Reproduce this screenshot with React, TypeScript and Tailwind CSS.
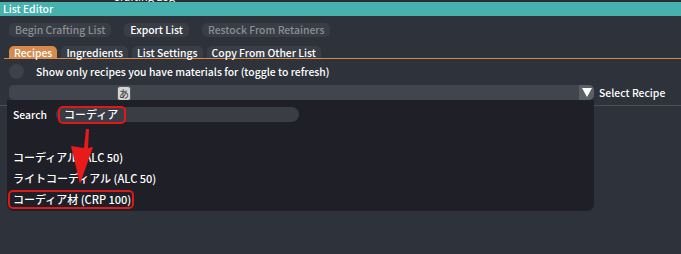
import React from 'react';

const font = { fontFamily: '"Noto Sans CJK JP", "Noto Sans", sans-serif' };

function Btn({ label, disabled }: { label: string; disabled?: boolean }) {
  return (
    <div
      className={`h-[14px] px-[6px] rounded-[5px] bg-[#393d45] text-[10.4px] font-medium leading-[14px] ${
        disabled ? 'text-[#8b8e94]' : 'text-white'
      }`}
    >
      {label}
    </div>
  );
}

function Tab({ label, active }: { label: string; active?: boolean }) {
  return (
    <div
      className={`h-[12px] px-[5px] rounded-t-[5px] text-[10.4px] font-medium leading-[13px] text-white ${
        active ? 'bg-[#d68a4c]' : 'bg-[#393d45]'
      }`}
    >
      {label}
    </div>
  );
}

export default function App() {
  const results = ['コーディアル (ALC 50)', 'ライトコーディアル (ALC 50)', 'コーディア材 (CRP 100)'];

  return (
    <div className="relative w-full h-[254px] overflow-hidden bg-[#2e323a]" style={font}>
      {/* clipped window behind */}
      <div className="h-[2px] bg-[#2a2d34] overflow-hidden">
        <div className="ml-[113px] -mt-[9px] text-[11px] leading-[11px] text-white">Crafting Log</div>
      </div>

      {/* title bar */}
      <div className="h-[14px] bg-[#46b2ad] pl-[3px] text-[10.4px] font-medium leading-[14px] text-white">List Editor</div>

      {/* action buttons */}
      <div className="flex gap-[13px] px-[9px] mt-[7px]">
        <Btn label="Begin Crafting List" disabled />
        <Btn label="Export List" />
        <Btn label="Restock From Retainers" disabled />
      </div>

      {/* tabs */}
      <div className="ml-[4px] mt-[9px] pl-[5px] flex gap-[4px] border-b border-[#d68a4c]">
        <Tab label="Recipes" active />
        <Tab label="Ingredients" />
        <Tab label="List Settings" />
        <Tab label="Copy From Other List" />
      </div>

      {/* checkbox */}
      <div className="flex items-center mt-[5px] pl-[9px]">
        <div className="w-[15px] h-[15px] rounded-full bg-[#3d4149]" />
        <span className="ml-[12px] text-[10.4px] font-medium leading-[15px] text-white">
          Show only recipes you have materials for (toggle to refresh)
        </span>
      </div>

      {/* combo */}
      <div className="relative flex items-center mt-[6px] pl-[9px]">
        <div className="relative w-[570px] h-[15px] rounded-l-[5px] bg-[#41454d]">
          <div className="absolute left-[108px] top-[1px] w-[14px] h-[15px] rounded-[3px] bg-[#d6d6d6] border border-[#55585e] text-[10px] leading-[13px] text-center text-[#333]">
            あ
          </div>
        </div>
        <div className="w-[15px] h-[15px] rounded-r-[5px] bg-[#5b5f66] flex items-center justify-center">
          <svg width="10" height="9" viewBox="0 0 10 9">
            <polygon points="0,0 10,0 5,9" fill="#ffffff" />
          </svg>
        </div>
        <span className="ml-[5px] text-[10.4px] font-medium leading-[15px] text-white">Select Recipe</span>
      </div>

      <div className="mt-[5px] h-px bg-[#4a4e56]" />

      {/* popup */}
      <div className="absolute left-[7px] top-[100px] w-[587px] h-[111px] rounded-b-[7px] bg-[#1f2027] text-white text-[10.4px] font-medium">
        <div className="flex items-center mt-[7px] pl-[6px]">
          <span className="leading-[15px]">Search</span>
          <div className="ml-[9px] w-[243px] h-[15px] rounded-full bg-[#3a3d45] pl-[8px] text-[11px] leading-[15px] relative">
            <span className="relative z-10">コーディア</span>
            <div className="absolute left-[2px] -top-[1px] w-[68px] h-[18px] rounded-[5px] border-2 border-[#e01818]" />
          </div>
        </div>
        <div className="mt-[28px] flex flex-col gap-[6px] pl-[6px] text-[11px]">
          {results.map((r, i) => (
            <div key={r} className="relative h-[15px] leading-[15px] w-fit">
              {r}
              {i === 2 && (
                <div className="absolute -left-[5px] -top-[2px] -right-[3px] -bottom-[2px] rounded-[5px] border-2 border-[#e01818]" />
              )}
            </div>
          ))}
        </div>
      </div>

      {/* annotation arrow */}
      <svg className="absolute left-0 top-0" width="681" height="254" viewBox="0 0 681 254">
        <polygon points="86,129 89,129 88,148 93,147 80,184 71,146 84,148" fill="#e81a1a" />
      </svg>
    </div>
  );
}
